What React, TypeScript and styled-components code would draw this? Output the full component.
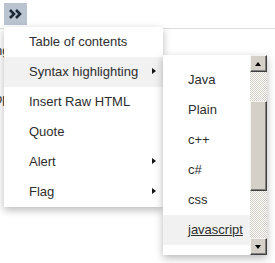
import styled, { createGlobalStyle } from "styled-components"

const GlobalStyle = createGlobalStyle`
  html, body {
    margin: 0;
    padding: 0;
    background: #fff;
    font-family: "Liberation Sans", Arial, sans-serif;
  }
`

const Page = styled.div`
  position: relative;
  width: 275px;
  height: 263px;
  overflow: hidden;
  background: #fff;
`

const Toolbar = styled.div`
  display: flex;
  align-items: flex-start;
  height: 29px;
  padding: 3px 0 0 4px;
  box-sizing: border-box;
  border-bottom: 1px solid #dcdcdc;
`

const ToolButton = styled.button`
  width: 23px;
  height: 22px;
  padding: 0;
  border: 0;
  background: #b9c4d0;
  display: flex;
  align-items: center;
  justify-content: center;
`

const Content = styled.div`
  display: flex;
  flex-direction: column;
  margin-left: -5px;
  padding-top: 10px;
  font-size: 13px;
  line-height: 24px;
  color: #333;
`

const Menu = styled.ul`
  position: absolute;
  left: 4px;
  top: 27px;
  width: 159px;
  margin: 0;
  padding: 0;
  list-style: none;
  background: #fff;
  box-shadow: 0 3px 8px rgba(0, 0, 0, 0.28);
  z-index: 2;
`

const Item = styled.li<{ $active?: boolean }>`
  position: relative;
  height: 30px;
  line-height: 30px;
  padding-left: 25px;
  font-size: 13px;
  color: #2e2e2e;
  background: ${(p) => (p.$active ? "#f1f1f1" : "transparent")};
  text-decoration: ${(p) => (p.$active ? "underline" : "none")};
  white-space: nowrap;
`

const MenuItem = styled(Item)`
  text-decoration: none;
`

const Arrow = styled.span`
  position: absolute;
  right: 7px;
  top: 11px;
  width: 0;
  height: 0;
  border-top: 3.5px solid transparent;
  border-bottom: 3.5px solid transparent;
  border-left: 4px solid #111;
`

const SubMenu = styled.div`
  position: absolute;
  left: 163px;
  top: 55px;
  width: 104px;
  height: 200px;
  display: flex;
  background: #fff;
  box-shadow: 0 3px 8px rgba(0, 0, 0, 0.28);
  z-index: 3;
`

const SubList = styled.ul`
  flex: 1;
  margin: 0;
  padding: 10px 0 0;
  list-style: none;
  overflow: hidden;
`

const Scrollbar = styled.div`
  width: 17px;
  display: flex;
  flex-direction: column;
  background: repeating-conic-gradient(#d4d0c8 0 25%, #ffffff 0 50%) 0 0 / 2px 2px;
`

const ScrollButton = styled.div`
  width: 17px;
  height: 17px;
  box-sizing: border-box;
  background: #d4d0c8;
  border-top: 1px solid #f4f3ef;
  border-left: 1px solid #f4f3ef;
  border-right: 1px solid #404040;
  border-bottom: 1px solid #404040;
  box-shadow: inset -1px -1px 0 #808080;
  display: flex;
  align-items: center;
  justify-content: center;
`

const Caret = styled.span<{ $down?: boolean }>`
  width: 0;
  height: 0;
  border-left: 3.5px solid transparent;
  border-right: 3.5px solid transparent;
  ${(p) =>
    p.$down ? "border-top: 4px solid #000;" : "border-bottom: 4px solid #000;"}
  margin-right: 1px;
`

const Track = styled.div`
  flex: 1;
  display: flex;
  flex-direction: column;
  padding-top: 29px;
`

const Thumb = styled.div`
  height: 90px;
  box-sizing: border-box;
  background: #d4d0c8;
  border-top: 1px solid #f4f3ef;
  border-left: 1px solid #f4f3ef;
  border-right: 1px solid #404040;
  border-bottom: 1px solid #404040;
  box-shadow: inset -1px -1px 0 #808080;
`

const mainItems = [
  { label: "Table of contents" },
  { label: "Syntax highlighting", sub: true, active: true },
  { label: "Insert Raw HTML" },
  { label: "Quote" },
  { label: "Alert", sub: true },
  { label: "Flag", sub: true },
]

const languages = ["Java", "Plain", "c++", "c#", "css", "javascript"]

const App = () => {
  return (
    <>
      <GlobalStyle />
      <Page>
        <Toolbar>
          <ToolButton>
            <svg width="13" height="10" viewBox="0 0 13 10">
              <path d="M1 1 L5 5 L1 9" fill="none" stroke="#1b2838" strokeWidth="2.6" />
              <path d="M7 1 L11 5 L7 9" fill="none" stroke="#1b2838" strokeWidth="2.6" />
            </svg>
          </ToolButton>
        </Toolbar>
        <Content>
          <span>ng</span>
          <span>&nbsp;</span>
          <span>op</span>
        </Content>

        <Menu>
          {mainItems.map((m) => (
            <MenuItem key={m.label} $active={m.active}>
              {m.label}
              {m.sub && <Arrow />}
            </MenuItem>
          ))}
        </Menu>

        <SubMenu>
          <SubList>
            {languages.map((l) => (
              <Item key={l} $active={l === "javascript"}>
                {l}
              </Item>
            ))}
          </SubList>
          <Scrollbar>
            <ScrollButton>
              <Caret />
            </ScrollButton>
            <Track>
              <Thumb />
            </Track>
            <ScrollButton>
              <Caret $down />
            </ScrollButton>
          </Scrollbar>
        </SubMenu>
      </Page>
    </>
  )
}

export default App
